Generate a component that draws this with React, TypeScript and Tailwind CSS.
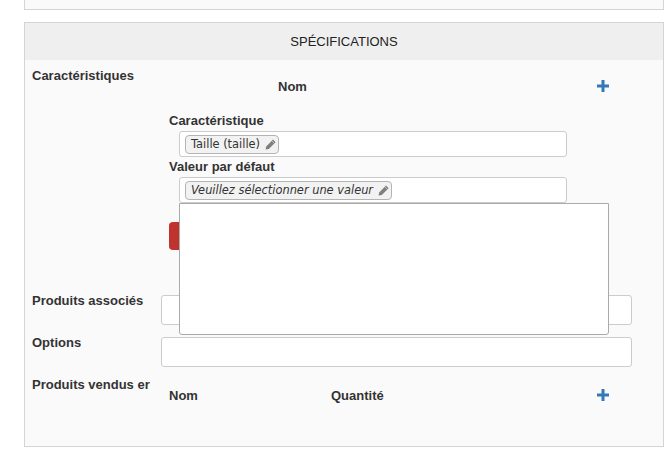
function PlusIcon() {
  return (
    <svg width="12" height="12" viewBox="0 0 12 12" className="mt-[2px] block">
      <path d="M4.5 0h3v4.5H12v3H7.5V12h-3V7.5H0v-3h4.5z" fill="#337ab7" />
    </svg>
  );
}

function PencilIcon() {
  return (
    <svg width="11" height="11" viewBox="0 0 11 11" className="block shrink-0">
      <path d="M8 .6 10.6 3.2 3.8 10 .6 10.6 1.2 7.4z" fill="#7f7f7f" />
      <path d="M7 2 9.3 4.3" stroke="#d8d8d8" strokeWidth="0.7" />
    </svg>
  );
}

function Tag({ text, italic }: { text: string; italic?: boolean }) {
  return (
    <span
      className={`flex h-[19px] items-center gap-[5px] rounded-[4px] border border-[#b4b4b4] bg-[#f2f2f2] pl-[5px] pr-[2px] font-['DejaVu_Sans',sans-serif] text-[11.4px] font-normal text-[#333] ${italic ? 'italic' : ''}`}
    >
      {text}
      <PencilIcon />
    </span>
  );
}

function TagInput({ children }: { children: React.ReactNode }) {
  return (
    <div className="ml-[18px] flex h-[26px] w-[388px] items-center rounded-[3px] border border-[#ccc] bg-white pl-[5px]">
      {children}
    </div>
  );
}

function RowLabel({ children }: { children: React.ReactNode }) {
  return <div className="w-[136px] shrink-0 pl-[7px] whitespace-nowrap">{children}</div>;
}

export default function App() {
  return (
    <div className="h-[454px] w-[670px] overflow-hidden bg-white font-['Liberation_Sans',Arial,sans-serif] text-[13px] leading-[18px] font-bold text-[#333]">
      {/* bloc précédent */}
      <div className="ml-6 h-[10px] w-[640px] border-x border-b border-[#d4d4d4] bg-[#fafafa]" />

      <div className="mt-3 ml-6 h-[425px] w-[640px] border border-[#d4d4d4] bg-[#fafafa]">
        <div className="flex h-[37px] items-center justify-center bg-[#efefef] font-normal text-[#222]">
          SPÉCIFICATIONS
        </div>

        {/* Caractéristiques */}
        <div className="flex pt-[7px]">
          <RowLabel>Caractéristiques</RowLabel>
          <div className="pt-[11px]">
            <div className="flex h-[18px] items-start">
              <span className="ml-[117px] w-[319px]">Nom</span>
              <PlusIcon />
            </div>
            <div className="mt-4 pl-2">Caractéristique</div>
            <div className="mt-px">
              <TagInput>
                <Tag text="Taille (taille)" />
              </TagInput>
            </div>
            <div className="mt-px pl-2">Valeur par défaut</div>
            <div className="relative mt-px">
              <TagInput>
                <Tag text="Veuillez sélectionner une valeur" italic />
              </TagInput>
              <div className="absolute top-[26px] left-[18px] z-10 h-[132px] w-[430px] rounded-b-[3px] border border-[#aaa] bg-white" />
            </div>
            <div className="mt-[19px] mb-[42px] ml-2 h-[28px] w-[80px] rounded-[4px] bg-[#c0342f]" />
          </div>
        </div>

        {/* Produits associés */}
        <div className="flex">
          <RowLabel>Produits associés</RowLabel>
          <div className="mt-[3px] h-[30px] w-[471px] rounded-[3px] border border-[#ccc] bg-white" />
        </div>

        {/* Options */}
        <div className="mt-[9px] flex">
          <RowLabel>Options</RowLabel>
          <div className="mt-[3px] h-[30px] w-[471px] rounded-[3px] border border-[#ccc] bg-white" />
        </div>

        {/* Produits vendus */}
        <div className="mt-[9px] flex">
          <RowLabel>Produits vendus er</RowLabel>
          <div className="mt-[11px] flex h-[18px] items-start">
            <span className="ml-2 w-[162px]">Nom</span>
            <span className="w-[266px]">Quantité</span>
            <PlusIcon />
          </div>
        </div>
      </div>
    </div>
  );
}
